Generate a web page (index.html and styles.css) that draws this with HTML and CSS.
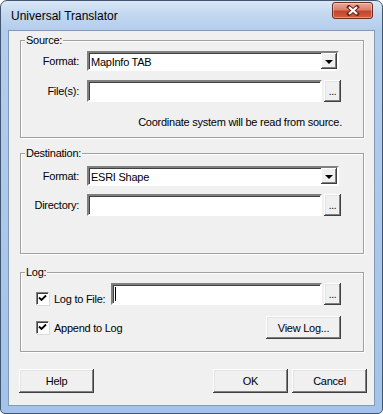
FILE: index.html
```html
<!DOCTYPE html>
<html lang="en">
<head>
    <meta charset="UTF-8">
    <title>Universal Translator</title>
    <link rel="stylesheet" href="styles.css">
</head>
<body>
    <div class="window">
        <div class="titlebar">
            <span class="title">Universal Translator</span>
            <span class="close">
                <svg width="14" height="11" viewBox="0 0 14 11">
                    <path d="M3 2 L11 9 M11 2 L3 9" stroke="#6e2417" stroke-width="4" stroke-linecap="square"/>
                    <path d="M3 2 L11 9 M11 2 L3 9" stroke="#fff" stroke-width="2.2"/>
                </svg>
            </span>
        </div>

        <div class="client">
            <!-- 源数据 -->
            <div class="group source">
                <span class="group-title">Source:</span>
                <div class="row first">
                    <span class="lbl">Format:</span>
                    <div class="combo">
                        <span class="combo-text">MapInfo TAB</span>
                        <span class="combo-btn"><i class="arrow"></i></span>
                    </div>
                </div>
                <div class="row second">
                    <span class="lbl">File(s):</span>
                    <div class="edit"></div>
                    <span class="btn browse">...</span>
                </div>
                <p class="note">Coordinate system will be read from source.</p>
            </div>

            <!-- 目标数据 -->
            <div class="group dest">
                <span class="group-title">Destination:</span>
                <div class="row first">
                    <span class="lbl">Format:</span>
                    <div class="combo">
                        <span class="combo-text">ESRI Shape</span>
                        <span class="combo-btn"><i class="arrow"></i></span>
                    </div>
                </div>
                <div class="row second">
                    <span class="lbl">Directory:</span>
                    <div class="edit"></div>
                    <span class="btn browse">...</span>
                </div>
            </div>

            <!-- 日志 -->
            <div class="group log">
                <span class="group-title">Log:</span>
                <div class="row first">
                    <span class="check">
                        <span class="box"><svg width="9" height="9" viewBox="0 0 9 9"><path d="M1 3.5 L3.5 6 L8 1.5" stroke="#000" stroke-width="1.8" fill="none"/></svg></span>
                        <span class="check-lbl">Log to File:</span>
                    </span>
                    <div class="edit log-edit"><i class="caret"></i></div>
                    <span class="btn browse">...</span>
                </div>
                <div class="row second">
                    <span class="check">
                        <span class="box"><svg width="9" height="9" viewBox="0 0 9 9"><path d="M1 3.5 L3.5 6 L8 1.5" stroke="#000" stroke-width="1.8" fill="none"/></svg></span>
                        <span>Append to Log</span>
                    </span>
                    <span class="btn viewlog">View Log...</span>
                </div>
            </div>

            <div class="buttons">
                <span class="btn dlg">Help</span>
                <span class="btn dlg ok">OK</span>
                <span class="btn dlg">Cancel</span>
            </div>
        </div>
    </div>
</body>
</html>
```

FILE: styles.css
```css
*{
    margin: 0;
    padding: 0;
    box-sizing: border-box;
}

body{
    background: #fff;
    font: 11px "Liberation Sans", Arial, sans-serif;
    color: #000;
}

.window{
    width: 383px;
    height: 414px;
    border: 1px solid #3f5570;
    border-radius: 7px 7px 5px 5px;
    background: linear-gradient(180deg, #dbe8f6 0, #c4d9f0 12px, #b3cdec 29px, #a3c3ea 100%);
    padding: 0 7px 7px;
    display: flex;
    flex-direction: column;
}

.titlebar{
    height: 29px;
    display: flex;
    align-items: flex-start;
    padding-left: 3px;
}

.title{
    font-size: 12px;
    line-height: 14px;
    margin-top: 8px;
}

.close{
    margin-left: auto;
    margin-right: 2px;
    margin-top: 1px;
    width: 41px;
    height: 17px;
    border: 1px solid #6b2c22;
    border-radius: 3px;
    background: linear-gradient(180deg, #e9a99a 0, #d98069 45%, #c4452b 55%, #d2603f 100%);
    box-shadow: inset 0 0 0 1px rgba(255,255,255,0.35);
    display: flex;
    align-items: center;
    justify-content: center;
}

.client{
    flex: 1;
    background: #f0f0f0;
    border: 1px solid #8399b5;
    padding: 9px 10px 0 11px;
    letter-spacing: -0.25px;
}

.group{
    border: 1px solid #a0a0a0;
    box-shadow: 1px 1px 0 #fff, inset 1px 1px 0 #fff;
}

.group-title{
    display: block;
    width: fit-content;
    margin: -7px 0 0 4px;
    padding: 0 1px;
    background: #f0f0f0;
    line-height: 13px;
}

.source{
    height: 98px;
}

.dest{
    margin-top: 15px;
    height: 101px;
}

.log{
    margin-top: 18px;
    height: 80px;
}

.row{
    display: flex;
    align-items: center;
}

.source .first{
    margin-top: 4px;
}

.source .second{
    margin-top: 9px;
}

.dest .first{
    margin-top: 6px;
}

.dest .second{
    margin-top: 8px;
}

.lbl{
    width: 58px;
    text-align: right;
    margin-right: 8px;
}

.combo{
    width: 252px;
    height: 20px;
    border: 2px solid;
    border-color: #808080 #fff #fff #808080;
    box-shadow: inset 1px 1px 0 #404040;
    background: #fff;
    display: flex;
    align-items: center;
}

.combo-text{
    padding-left: 2px;
    padding-top: 1px;
}

.combo-btn{
    margin-left: auto;
    width: 16px;
    height: 16px;
    background: #f0f0f0;
    box-shadow: inset -1px -1px 0 #404040, inset 1px 1px 0 #fff, inset -2px -2px 0 #808080;
    display: flex;
    align-items: center;
    justify-content: center;
}

.arrow{
    width: 0;
    height: 0;
    border-left: 4px solid transparent;
    border-right: 4px solid transparent;
    border-top: 4px solid #000;
    margin-top: 1px;
}

.edit{
    width: 235px;
    height: 22px;
    border: 2px solid;
    border-color: #808080 #fff #fff #808080;
    box-shadow: inset 1px 1px 0 #404040;
    background: #fff;
}

.btn{
    display: flex;
    align-items: center;
    justify-content: center;
    background: #f0f0f0;
    box-shadow: inset -1px -1px 0 #404040, inset 1px 1px 0 #fff, inset -2px -2px 0 #808080, inset 2px 2px 0 #e3e3e3;
}

.browse{
    width: 17px;
    height: 22px;
    margin-left: 2px;
    align-items: flex-end;
    padding-bottom: 6px;
    line-height: 8px;
    font-size: 10px;
}

.note{
    margin-top: 14px;
    line-height: 13px;
    text-align: right;
    width: 321px;
}

.log .first{
    margin-top: 4px;
    align-items: flex-end;
}

.log .second{
    margin-top: 11px;
    width: 320px;
}

.check{
    display: flex;
    align-items: center;
    margin-left: 15px;
}

.box{
    width: 13px;
    height: 13px;
    border: 1px solid;
    border-color: #808080 #fff #fff #808080;
    box-shadow: inset 1px 1px 0 #404040, 1px 1px 0 #dcdcdc;
    background: #fff;
    margin-right: 5px;
    display: flex;
    align-items: center;
    justify-content: center;
}

.check-lbl{
    width: 57px;
}

.log-edit{
    width: 211px;
    position: relative;
}

.caret{
    position: absolute;
    left: 2px;
    top: 2px;
    width: 1px;
    height: 14px;
    background: #000;
}

.viewlog{
    margin-left: auto;
    width: 75px;
    height: 23px;
}

.buttons{
    margin: 17px -3px 0 -1px;
    display: flex;
    gap: 4px;
}

.dlg{
    width: 75px;
    height: 24px;
}

.ok{
    margin-left: auto;
}
```
